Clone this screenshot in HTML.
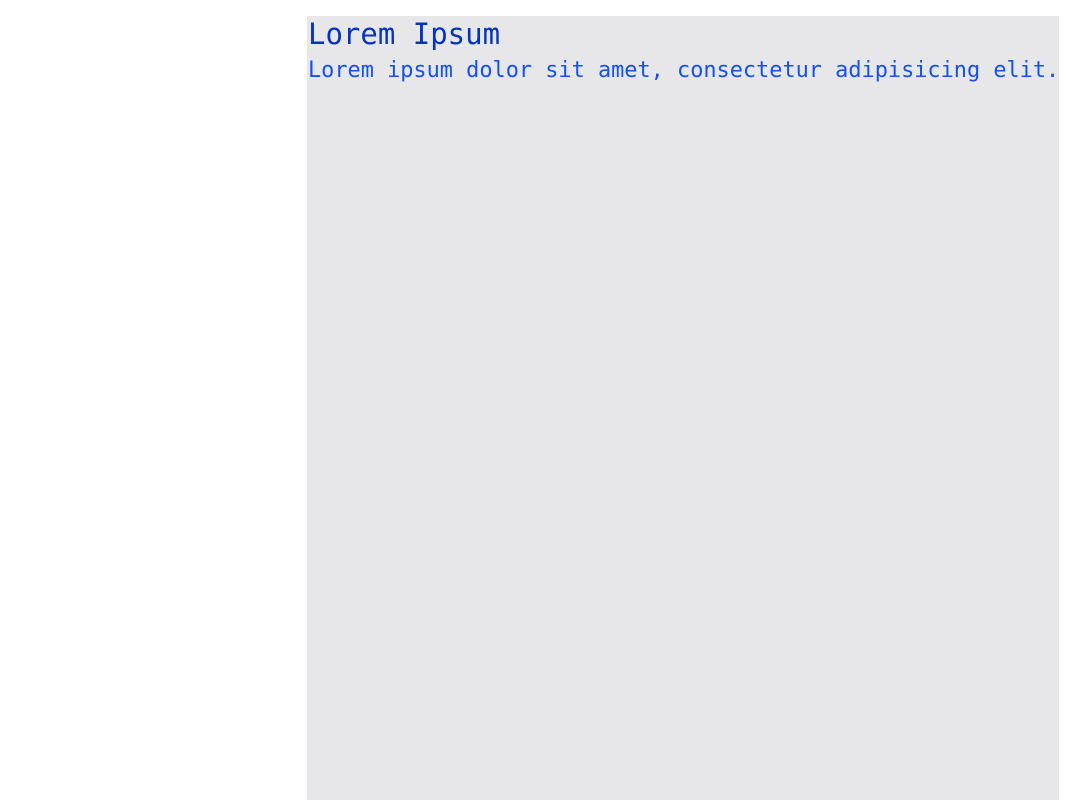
<!DOCTYPE html>
<html><head><style>
body{margin:0;background:#fff;width:1076px;height:800px;overflow:hidden;font-family:"DejaVu Sans Mono",monospace;}
.box{position:absolute;left:307px;top:16px;width:752px;height:784px;background:#e7e7ea;}
h1{margin:0;position:absolute;left:1px;top:0px;font-size:29px;font-weight:normal;color:#0433c0;line-height:36px;white-space:nowrap;}
p{margin:0;position:absolute;left:1px;top:41px;font-size:21.9px;color:#1450f5;line-height:28px;white-space:nowrap;}
</style></head><body>
<div class="box"><h1>Lorem Ipsum</h1><p>Lorem ipsum dolor sit amet, consectetur adipisicing elit.</p></div>
</body></html>
